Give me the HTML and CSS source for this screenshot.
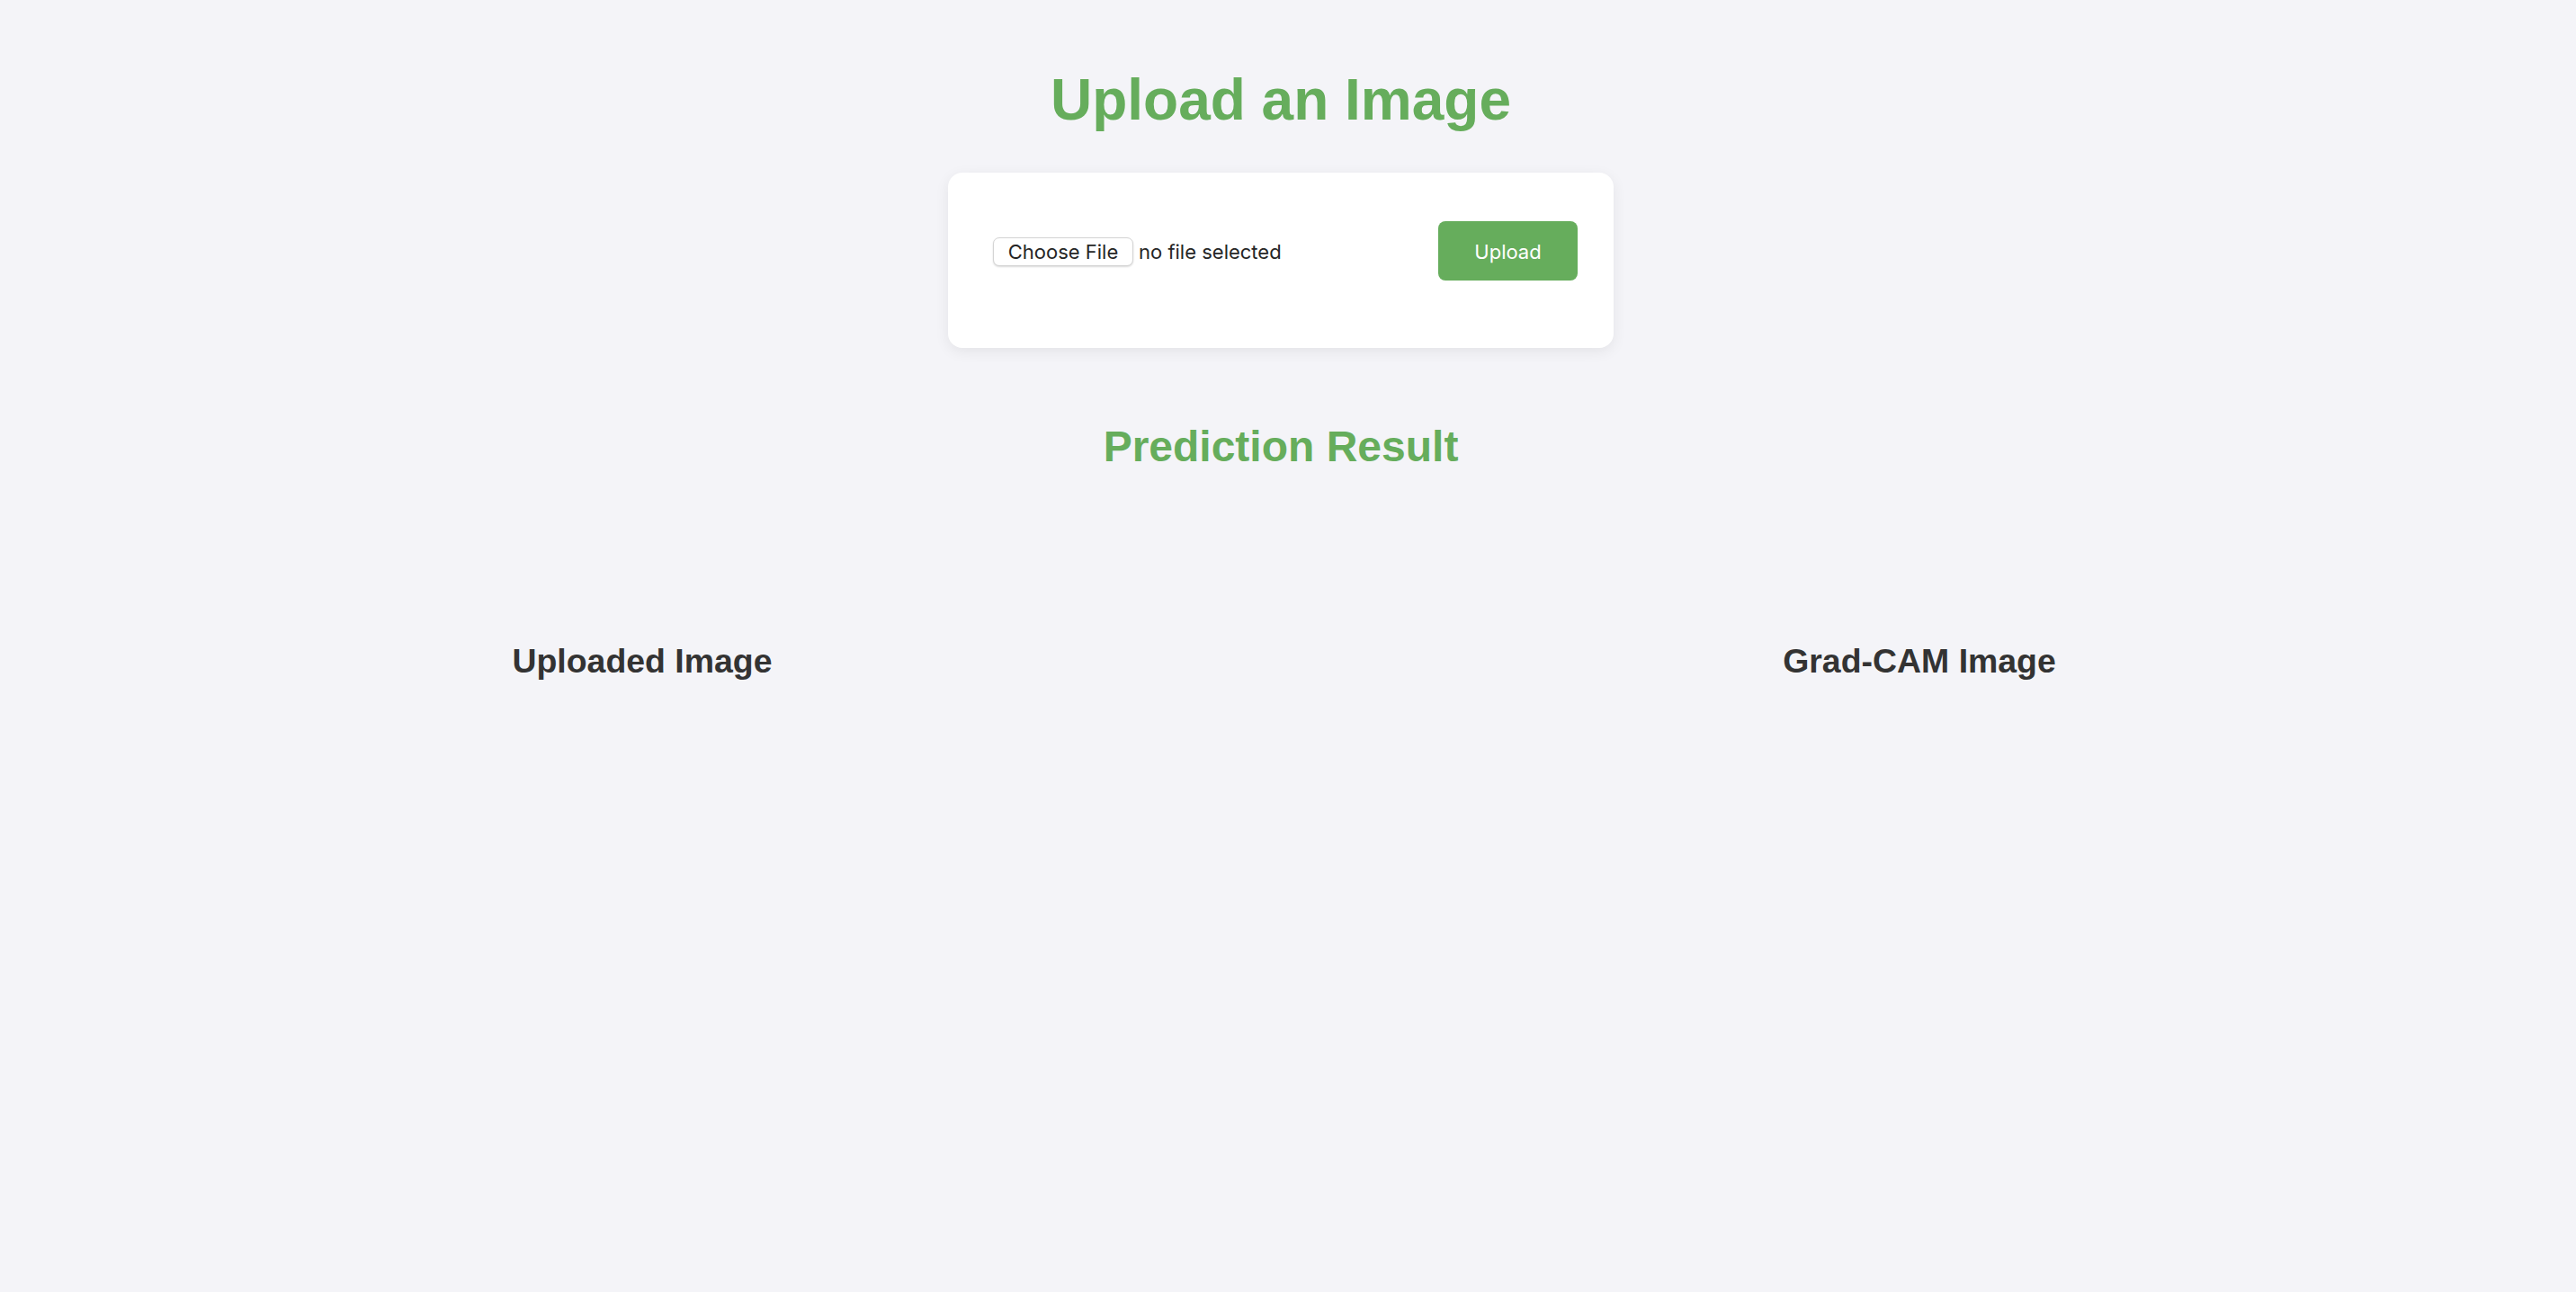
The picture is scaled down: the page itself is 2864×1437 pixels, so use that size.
FILE: index.html
```html
<!DOCTYPE html>
<html lang="en">
<head>
<meta charset="utf-8">
<title>Upload an Image</title>
<link rel="stylesheet" href="styles.css">
</head>
<body>
<main class="page">
  <h1 class="title">Upload an Image</h1>
  <form class="card" onsubmit="return false">
    <div class="row">
      <div class="file-field">
        <span class="file-btn">Choose File</span>
        <span class="file-name">no file selected</span>
      </div>
      <button class="upload-btn" type="submit">Upload</button>
    </div>
  </form>
  <h2 class="result-title">Prediction Result</h2>
  <section class="images">
    <div class="image-col"><h3 class="col-title">Uploaded Image</h3></div>
    <div class="image-col"><h3 class="col-title">Grad-CAM Image</h3></div>
  </section>
</main>
</body>
</html>
```
FILE: styles.css
```css
html, body {
  margin: 0;
  padding: 0;
  background: #f4f4f8;
}
body {
  min-height: 1437px;
  font-family: "Liberation Sans", Arial, sans-serif;
}
.page {
  width: 2848px;
  padding-top: 31px;
  display: flex;
  flex-direction: column;
  align-items: center;
}
.title {
  margin: 43px 0 44px;
  font-size: 64px;
  font-weight: 700;
  line-height: 74px;
  color: #66ad5c;
}
.card {
  box-sizing: border-box;
  width: 740px;
  height: 195px;
  padding: 54px 40px 0 50px;
  background: #ffffff;
  border-radius: 16px;
  box-shadow: 0 4px 16px rgba(0, 0, 0, 0.07);
}
.row {
  display: flex;
  align-items: center;
  justify-content: space-between;
  height: 66px;
}
.file-field {
  display: flex;
  align-items: center;
  gap: 6px;
  font-family: Inter, "Noto Sans", sans-serif;
  font-size: 22px;
  color: #262626;
}
.file-btn {
  box-sizing: border-box;
  height: 32px;
  width: 156px;
  display: flex;
  align-items: center;
  justify-content: center;
  background: #fff;
  border: 1px solid #d4d4d4;
  border-radius: 7px;
  box-shadow: 0 1px 2px rgba(0, 0, 0, 0.15);
  margin-top: 1px;
}
.file-name {
  margin-top: 1px;
}
.upload-btn {
  width: 155px;
  height: 66px;
  border: none;
  border-radius: 8px;
  background: #66ad5c;
  color: #ffffff;
  font-family: Inter, "Noto Sans", sans-serif;
  font-size: 22px;
  padding: 2px 0 0;
}
.result-title {
  margin: 82px 0 0;
  font-size: 48px;
  font-weight: 700;
  line-height: 55px;
  color: #66ad5c;
}
.images {
  box-sizing: border-box;
  width: 100%;
  padding: 0 4px;
  margin-top: 190px;
  display: grid;
  grid-template-columns: 1fr 1fr;
}
.image-col {
  text-align: center;
}
.col-title {
  margin: 0;
  font-size: 37.44px;
  font-weight: 700;
  line-height: 43px;
  color: #333333;
}
```
